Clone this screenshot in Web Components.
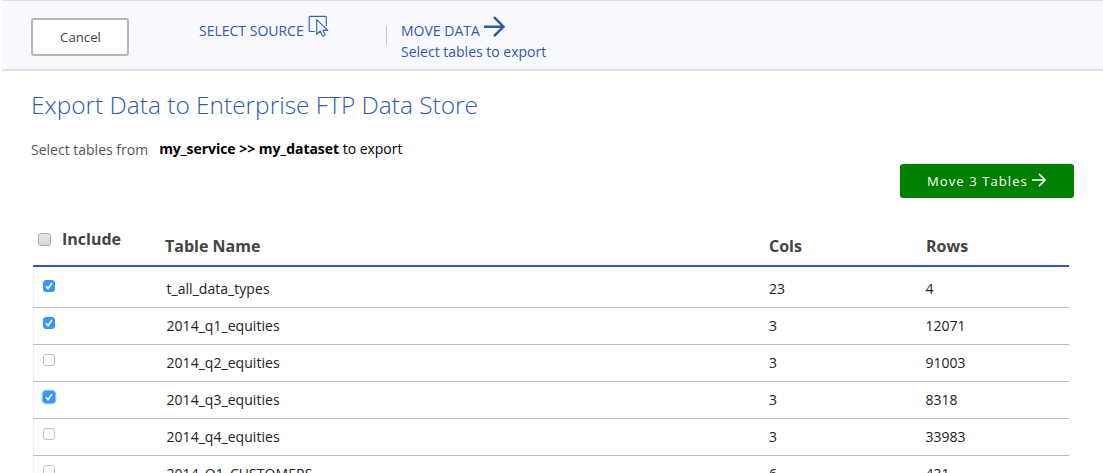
<!DOCTYPE html>
<html lang="en">
<head>
<meta charset="utf-8">
<title>Export Data</title>
<style>
  html, body { margin: 0; height: 100%; overflow: hidden; background: #fff; }
  body { font: 14px/20px "Open Sans", "Noto Sans", sans-serif; color: #222; }
</style>
</head>
<body>
<export-page></export-page>
<script>
const define = (name, html, setup) => {
  const template = document.createElement('template');
  template.innerHTML = html;
  customElements.define(name, class extends HTMLElement {
    constructor() {
      super();
      this.attachShadow({ mode: 'open' }).append(template.content.cloneNode(true));
      if (setup) setup(this);
    }
  });
};

define('cancel-button', `
  <style>
    :host { display: block; }
    button { display: block; box-sizing: border-box; width: 98px; height: 38px; padding: 0 0 1px 1px; border: 2px solid #b5b5b5;
      border-radius: 3px; background: #fff; color: #444; font: inherit; font-size: 13.2px; }
  </style>
  <button><slot></slot></button>`);

define('wizard-step', `
  <style>
    :host { display: block; color: #2f5aae; }
    .head { display: flex; height: 20px; white-space: nowrap; }
    .sub { height: 20px; margin-top: 1px; white-space: nowrap; }
  </style>
  <div class="head"><slot></slot><slot name="icon"></slot></div>
  <div class="sub"><slot name="detail"></slot></div>`);

define('pick-icon', `
  <style>:host { display: block; margin: -6px 0 0 4px; } svg { display: block; }</style>
  <svg width="22" height="23" viewBox="0 0 22 23" fill="none" stroke="#3c63b2" stroke-width="1.15" stroke-linejoin="round">
    <path d="M7 16.5H2.2Q1.2 16.5 1.2 15.5V2.3Q1.2 1.3 2.2 1.3H17.3Q18.3 1.3 18.3 2.3V11"/>
    <path d="M8.7 4.7V19.3L12.2 16L14.7 21.2L17.2 20L14.9 15.4H19.8Z" fill="#f8f8ff"/>
  </svg>`);

define('step-arrow', `
  <style>:host { display: block; margin: -5px 0 0 4px; } svg { display: block; }</style>
  <svg width="22" height="22" viewBox="0 0 22 22" fill="none" stroke="#3158aa" stroke-width="2.5">
    <path d="M0 10.7H19.5M10 1.2L19.5 10.7L10 20.2"/>
  </svg>`);

define('wizard-bar', `
  <style>
    :host { display: flex; box-sizing: border-box; height: 71px; margin-left: 2px; padding: 17px 0 0 29px; align-items: flex-start;
      background: #f8f8ff; border-top: 1px solid #e6dedd; border-bottom: 2px solid #e6dedc; }
    wizard-step.one { width: 187px; margin: 3px 0 0 70px; }
    wizard-step.two { margin: 3px 0 0 14px; }
    .rule { width: 1px; height: 19px; margin-top: 8px; background: #c4c4cb; }
  </style>
  <cancel-button>Cancel</cancel-button>
  <wizard-step class="one">SELECT SOURCE<pick-icon slot="icon"></pick-icon></wizard-step>
  <span class="rule"></span>
  <wizard-step class="two">MOVE DATA<step-arrow slot="icon"></step-arrow><span slot="detail">Select tables to export</span></wizard-step>`);

define('move-button', `
  <style>
    :host { display: block; }
    button { display: flex; align-items: center; box-sizing: border-box; width: 174px; height: 34px; padding: 0 0 0 27px;
      border: 0; border-radius: 3px; background: #007f00; color: #fff; font: inherit; font-size: 13.1px; font-weight: 500; letter-spacing: 1.05px; }
    svg { display: block; margin: -2px 0 0 4px; }
  </style>
  <button><slot></slot>
    <svg width="14" height="14" viewBox="0 0 14 14" fill="none" stroke="#fff" stroke-width="1.6"><path d="M0 7H13M7 .9L13.1 7L7 13.1"/></svg>
  </button>`);

define('check-box', `
  <style>
    :host { display: block; box-sizing: border-box; width: 12px; height: 12px; border: 1px solid #c3c3c3; border-radius: 3px; background: #fff; }
    svg { display: none; }
    :host([gray]) { height: 13px; width: 13px; border-color: #aaa; background: linear-gradient(#e8e8e8, #d8d8d8); }
    :host([checked]) { border-color: #3592f5; background: #3797fb; }
    :host([checked]) svg { display: block; margin: -1px; }
    :host([focused]) { box-shadow: 0 0 0 1.3px #8fc0f5; }
  </style>
  <svg width="12" height="12" viewBox="0 0 12 12" fill="none" stroke="#fff" stroke-width="1.5"><path d="M3 6.3L5 8.7L9 3"/></svg>`);

define('table-head', `
  <style>
    :host { display: grid; grid-template-columns: 132px 604px 157px 1fr; box-sizing: border-box; height: 40px;
      color: #444; font-size: 16px; line-height: 22px; font-weight: 700; border-bottom: 2px solid #3459ae; }
    .inc { display: flex; padding: 1px 0 0 5px; }
    check-box { margin: 5px 11px 0 0; }
    .h { padding-top: 8px; }
  </style>
  <div class="inc"><check-box gray></check-box>Include</div>
  <div class="h">Table Name</div><div class="h">Cols</div><div class="h">Rows</div>`);

define('table-row', `
  <style>
    :host { display: grid; grid-template-columns: 133.5px 602.5px 156.5px 1fr; box-sizing: border-box; height: 37px;
      padding-top: 8px; border-bottom: 1px solid #bdbdbd; background: linear-gradient(#f0f0f0, #f0f0f0) 0 0 / 1px 100% no-repeat; }
    .c { padding: 1px 0 0 10px; }
    slot[name=name]::slotted(*) { letter-spacing: .04px; }
  </style>
  <div class="c"><check-box></check-box></div>
  <slot name="name"></slot><slot name="cols"></slot><slot name="rows"></slot>`,
  host => {
    const box = host.shadowRoot.querySelector('check-box');
    if (host.hasAttribute('checked')) box.setAttribute('checked', '');
    if (host.hasAttribute('focused')) box.setAttribute('focused', '');
  });

const rows = [
  ['t_all_data_types', 23, 4, 'checked'],
  ['2014_q1_equities', 3, 12071, 'checked'],
  ['2014_q2_equities', 3, 91003, ''],
  ['2014_q3_equities', 3, 8318, 'checked focused'],
  ['2014_q4_equities', 3, 33983, ''],
  ['2014_Q1_CUSTOMERS', 6, 431, '']
];

define('export-page', `
  <style>
    :host { display: block; height: 473px; overflow: hidden; }
    main { padding: 0 29px 0 31px; }
    h1 { margin: 0; padding-top: 18px; font-size: 24.45px; line-height: 32px; font-weight: 300; color: #2f5aae; }
    .intro { display: flex; padding-top: 18px; }
    .intro .from { margin: 1px 11px 0 0; color: #555; }
    .intro .what { color: #000; white-space: pre; letter-spacing: -.03px; }
    .actions { display: flex; justify-content: flex-end; padding-top: 4px; }
    .list { width: 1036px; margin: 29px 0 0 2px; }
    .body { padding-top: 4px; }
  </style>
  <wizard-bar></wizard-bar>
  <main>
    <h1>Export Data to Enterprise FTP Data Store</h1>
    <div class="intro"><span class="from">Select tables from</span><span class="what"><b>my_service &gt;&gt; my_dataset</b> to export</span></div>
    <div class="actions"><move-button>Move 3 Tables</move-button></div>
    <div class="list">
      <table-head></table-head>
      <div class="body">${rows.map(([n, c, r, a]) => `<table-row ${a}><span slot="name">${n}</span><span slot="cols">${c}</span><span slot="rows">${r}</span></table-row>`).join('')}</div>
    </div>
  </main>`);
</script>
</body>
</html>
